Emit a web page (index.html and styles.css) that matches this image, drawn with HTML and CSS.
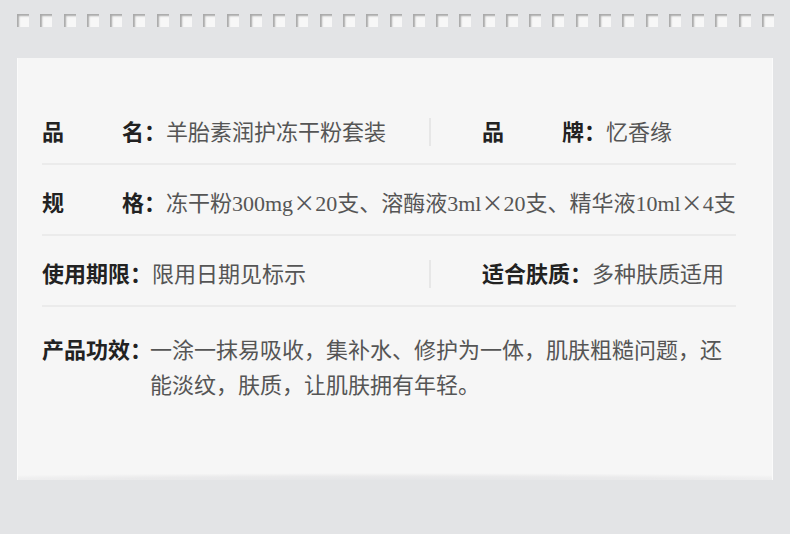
FILE: index.html
```html
<!DOCTYPE html>
<html lang="zh-CN">
<head>
  <meta charset="UTF-8">
  <title>产品信息</title>
  <link rel="stylesheet" href="styles.css">
</head>
<body>
  <div class="holes">
    <span></span><span></span><span></span><span></span><span></span><span></span><span></span><span></span><span></span><span></span><span></span>
    <span></span><span></span><span></span><span></span><span></span><span></span><span></span><span></span><span></span><span></span><span></span>
    <span></span><span></span><span></span><span></span><span></span><span></span><span></span><span></span><span></span><span></span><span></span>
  </div>

  <div class="card">
    <div class="row">
      <div class="cell left">
        <span class="label spread"><span>品</span><span>名：</span></span>
        <span class="value">羊胎素润护冻干粉套装</span>
      </div>
      <i class="sep"></i>
      <div class="cell right">
        <span class="label spread"><span>品</span><span>牌：</span></span>
        <span class="value">忆香缘</span>
      </div>
    </div>

    <div class="row">
      <div class="cell">
        <span class="label spread"><span>规</span><span>格：</span></span>
        <span class="value nowrap">冻干粉300mg<span class="x">×</span>20支、溶酶液3ml<span class="x">×</span>20支、精华液10ml<span class="x">×</span>4支</span>
      </div>
    </div>

    <div class="row">
      <div class="cell left">
        <span class="label">使用期限：</span>
        <span class="value">限用日期见标示</span>
      </div>
      <i class="sep"></i>
      <div class="cell right">
        <span class="label">适合肤质：</span>
        <span class="value">多种肤质适用</span>
      </div>
    </div>

    <div class="row last">
      <div class="cell top">
        <span class="label">产品功效：</span>
        <span class="value para">一涂一抹易吸收，集补水、修护为一体，肌肤粗糙问题，还能淡纹，肤质，让肌肤拥有年轻。</span>
      </div>
    </div>
  </div>
</body>
</html>
```

FILE: styles.css
```css
body {
  margin: 0;
  background: #e3e4e6;
  font-family: "Liberation Serif", "Noto Sans CJK SC", serif;
  color: #222;
}

.holes {
  display: flex;
  justify-content: space-between;
  padding: 14px 16px 0 17px;
  height: 13px;
}

.holes span {
  width: 12px;
  height: 13px;
  background: #f7f7f7;
  box-shadow: inset 2px 2px 2px #a9a9a9;
}

.card {
  position: relative;
  margin: 31px 17px 0;
  height: 422px;
  box-sizing: border-box;
  padding: 36px 36px 0 24px;
  background: #f6f6f6;
  border-left: 1px solid #fbfbfb;
  border-right: 1px solid #fbfbfb;
}

.card::after {
  content: "";
  position: absolute;
  left: 0;
  right: 0;
  bottom: 0;
  height: 7px;
  background: radial-gradient(ellipse 70% 100% at 50% 100%, #e4e5e7 0%, #eaeaeb 55%, rgba(246,246,246,0) 100%);
}

.row {
  display: flex;
  align-items: center;
  box-sizing: border-box;
  height: 71px;
  padding-top: 6px;
  border-bottom: 2px solid #ebebeb;
  font-size: 22px;
  line-height: 26px;
}

.row.last {
  display: block;
  height: auto;
  border-bottom: none;
  padding-top: 24px;
  line-height: 35px;
}

.cell {
  display: flex;
  align-items: baseline;
}

.cell.left {
  flex: 0 0 387px;
}

.cell.right {
  padding-left: 51px;
}

.sep {
  width: 2px;
  height: 28px;
  background: #e7e7e7;
}

.label {
  font-family: "Noto Sans CJK SC", sans-serif;
  font-weight: 700;
  color: #222;
  white-space: nowrap;
}

.label.spread {
  display: flex;
  justify-content: space-between;
  width: 124px;
}

.value {
  color: #555;
}

.value.nowrap {
  white-space: nowrap;
}

.value.para {
  flex: 1;
  margin-left: -2px;
}

.x {
  font-family: "Noto Sans CJK SC", sans-serif;
}
```
